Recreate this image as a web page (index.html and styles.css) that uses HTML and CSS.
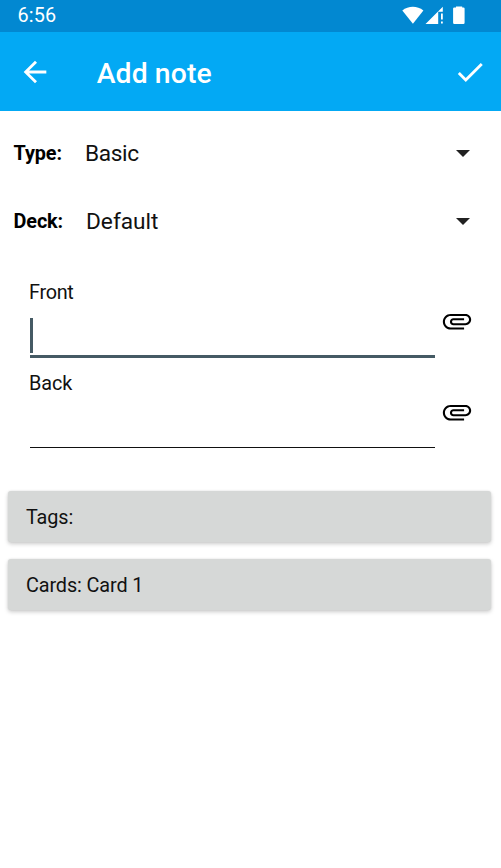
FILE: index.html
```html
<!DOCTYPE html>
<html lang="en">
<head>
<meta charset="utf-8">
<title>Add note</title>
<link rel="stylesheet" href="styles.css">
</head>
<body>
<div class="status">
  <span class="clock">6:56</span>
  <svg class="status-icons" width="64" height="20" viewBox="0 0 64 20" fill="#fff">
    <path d="M.3 4.400C6.500-.6 15.200-.6 21.400 4.400L10.900 17.700Z"/>
    <path d="M23.500 18L40.800 .7V5.800H36.200V18Z"/>
    <path d="M39 7.500H40.800V13.500H39ZM39 15.400H40.800V17.600H39Z"/>
    <path d="M54 .4H60.200V1.400H61.400Q62.600 1.400 62.600 2.600V16.700Q62.600 18 61.400 18H52.300Q51.100 18 51.100 16.700V2.600Q51.100 1.400 52.300 1.400H54Z"/>
  </svg>
</div>
<header class="toolbar">
  <svg class="icon back" viewBox="0 0 24 24"><path d="M20 11H7.830l5.590-5.590L12 4l-8 8 8 8 1.410-1.410L7.830 13H20z"/></svg>
  <h1 class="title">Add note</h1>
  <svg class="icon" viewBox="0 0 24 24"><path d="M9 16.170L4.830 12l-1.420 1.410L9 19 21 7l-1.410-1.410z"/></svg>
</header>
<main>
  <div class="select"><b class="label">Type:</b><span class="value type">Basic</span><i class="caret"></i></div>
  <div class="select"><b class="label">Deck:</b><span class="value deck">Default</span><i class="caret"></i></div>
  <section class="fields">
    <div class="field">
      <div class="entry focused"><label class="front">Front</label><div class="line"><span class="cursor"></span></div></div>
      <svg class="icon clip" viewBox="0 0 24 24"><path d="M2 12.500C2 9.460 4.460 7 7.500 7H18c2.210 0 4 1.790 4 4s-1.790 4-4 4H9.500C8.120 15 7 13.880 7 12.500S8.120 10 9.500 10H17v1.500H9.500c-1.300 0-1.300 2 0 2H18c1.380 0 2.500-1.120 2.500-2.500S19.380 8.500 18 8.500H7.500c-2.210 0-4 1.790-4 4s1.790 4 4 4H17V18H7.500C4.460 18 2 15.540 2 12.500z"/></svg>
    </div>
    <div class="field">
      <div class="entry"><label>Back</label><div class="line"></div></div>
      <svg class="icon clip" viewBox="0 0 24 24"><path d="M2 12.500C2 9.460 4.460 7 7.500 7H18c2.210 0 4 1.790 4 4s-1.790 4-4 4H9.500C8.120 15 7 13.880 7 12.500S8.120 10 9.500 10H17v1.500H9.500c-1.300 0-1.300 2 0 2H18c1.380 0 2.500-1.120 2.500-2.500S19.380 8.500 18 8.500H7.500c-2.210 0-4 1.790-4 4s1.790 4 4 4H17V18H7.500C4.460 18 2 15.540 2 12.500z"/></svg>
    </div>
  </section>
  <div class="buttons">
    <div class="button">Tags:</div>
    <div class="button">Cards: Card 1</div>
  </div>
</main>
</body>
</html>
```
FILE: styles.css
```css
* { box-sizing: border-box; }
body {
  margin: 0;
  min-height: 868px;
  background: #fff;
  color: #111;
  font-family: Roboto, sans-serif;
  font-size: 19.830px;
}
.status {
  display: flex;
  justify-content: space-between;
  height: 32px;
  padding: 0 35.500px 0 17.500px;
  background: #0288d1;
  color: #fff;
}
.clock { line-height: 32px; letter-spacing: .1px; }
.status-icons { margin-top: 6px; }
.toolbar {
  display: flex;
  align-items: center;
  height: 79px;
  padding: 0 14px 0 17.700px;
  background: #03a9f4;
  color: #fff;
}
.icon { width: 34px; height: 34px; flex: none; fill: currentColor; }
.title { flex: 1; margin: 4px 0 0 45px; font-size: 28.330px; font-weight: 500; line-height: 34px; letter-spacing: .1px; }
main { padding-top: 8px; }
.select { display: flex; align-items: center; height: 68px; padding: 0 31px 0 13.500px; }
.label { width: 71.500px; padding-top: 1px; font-weight: 700; color: #000; letter-spacing: -.1px; }
.value { flex: 1; font-size: 22.670px; }
.type { letter-spacing: -.35px; }
.deck { padding-left: 1px; }
.caret { border: 7px solid transparent; border-top-color: #212121; border-bottom: 0; }
.fields { padding: 25px 27px 0 29px; }
.field { display: flex; justify-content: space-between; height: 91px; }
.entry { width: 406px; }
.entry label { display: block; height: 37px; line-height: 25px; letter-spacing: -.1px; }
.entry .front { letter-spacing: -.3px; }
.line { width: 405px; height: 40px; margin-left: 1px; padding-top: 1px; border-bottom: 1px solid #111; }
.focused .line { height: 41px; border-bottom: 3px solid #455a64; }
.cursor { display: block; width: 3px; height: 35px; background: #455a64; }
.clip { margin-top: 23.500px; color: #000; }
.buttons { display: flex; flex-direction: column; gap: 17px; padding: 29px 10px 0 8px; }
.button {
  height: 51px;
  padding-left: 18px;
  border-radius: 3px;
  background: #d6d8d7;
  line-height: 54px;
  letter-spacing: -.12px;
  box-shadow: 0 2px 4px rgba(0, 0, 0, .2), 0 0 2px rgba(0, 0, 0, .1);
}
```
